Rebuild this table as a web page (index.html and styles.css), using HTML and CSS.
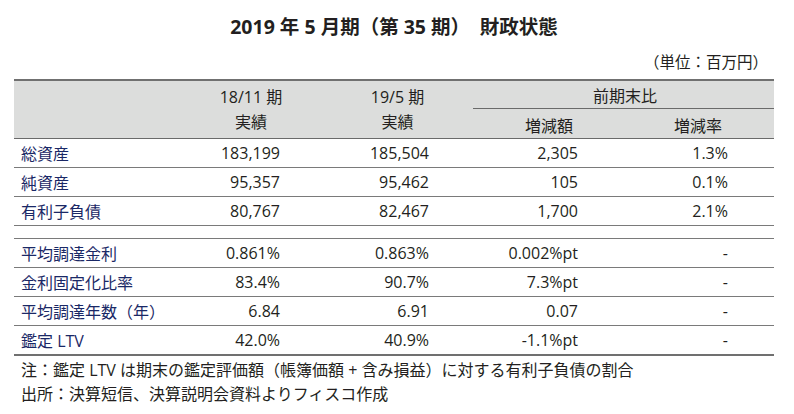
FILE: index.html
```html
<!DOCTYPE html>
<html lang="ja">
<head>
<meta charset="utf-8">
<link rel="stylesheet" href="styles.css">
</head>
<body>
<div class="wrap">
  <h1 class="title">2019 年 5 月期（第 35 期）　財政状態</h1>
  <div class="unit">（単位：百万円）</div>
  <div class="tbl">
    <div class="head">
      <div class="h-label"></div>
      <div class="h-per">18/11 期<br>実績</div>
      <div class="h-per">19/5 期<br>実績</div>
      <div class="h-cmp">前期末比</div>
      <div class="h-sub">増減額</div>
      <div class="h-sub">増減率</div>
    </div>
    <div class="row"><div class="lbl">総資産</div><div class="num">183,199</div><div class="num">185,504</div><div class="num">2,305</div><div class="num">1.3%</div></div>
    <div class="row"><div class="lbl">純資産</div><div class="num">95,357</div><div class="num">95,462</div><div class="num">105</div><div class="num">0.1%</div></div>
    <div class="row"><div class="lbl">有利子負債</div><div class="num">80,767</div><div class="num">82,467</div><div class="num">1,700</div><div class="num">2.1%</div></div>
    <div class="spacer"></div>
    <div class="row"><div class="lbl">平均調達金利</div><div class="num">0.861%</div><div class="num">0.863%</div><div class="num">0.002%pt</div><div class="num">-</div></div>
    <div class="row"><div class="lbl">金利固定化比率</div><div class="num">83.4%</div><div class="num">90.7%</div><div class="num">7.3%pt</div><div class="num">-</div></div>
    <div class="row"><div class="lbl">平均調達年数（年）</div><div class="num">6.84</div><div class="num">6.91</div><div class="num">0.07</div><div class="num">-</div></div>
    <div class="row last"><div class="lbl">鑑定 LTV</div><div class="num">42.0%</div><div class="num">40.9%</div><div class="num">-1.1%pt</div><div class="num">-</div></div>
  </div>
  <div class="notes">
    <p>注：鑑定 LTV は期末の鑑定評価額（帳簿価額 + 含み損益）に対する有利子負債の割合</p>
    <p>出所：決算短信、決算説明会資料よりフィスコ作成</p>
  </div>
</div>
</body>
</html>
```
FILE: styles.css
```css
* { box-sizing: border-box; }
html, body { margin: 0; padding: 0; background: #fff; }
body {
  font-family: "Open Sans", "Noto Sans CJK JP", sans-serif;
  color: #231f20;
  font-size: 16px;
}
.wrap {
  width: 760px;
  margin-left: 14px;
}
.title {
  margin: 15px 0 0;
  font-size: 19.5px;
  font-weight: 700;
  line-height: 24px;
  text-align: center;
}
.unit {
  margin-top: 11px;
  font-size: 15.5px;
  line-height: 24px;
  text-align: right;
  padding-right: 6px;
}
.tbl { margin-top: 5px; }
.head {
  display: grid;
  grid-template-columns: 163px 148px 145px 152px 152px;
  grid-template-rows: 28px 29px;
  background: #dcdddc;
  border-top: 2px solid #707070;
  border-bottom: 1px solid #6a6a6a;
}
.h-label { grid-row: 1 / 3; grid-column: 1; }
.h-per {
  grid-row: 1 / 3;
  display: flex;
  flex-direction: column;
  justify-content: center;
  align-items: center;
  text-align: center;
  line-height: 25px;
}
.h-per:nth-child(2) { grid-column: 2; }
.h-per:nth-child(3) { grid-column: 3; }
.h-cmp {
  grid-column: 4 / 6;
  grid-row: 1;
  display: flex;
  align-items: center;
  justify-content: center;
  border-bottom: 1px solid #6a6a6a;
  padding-left: 3px;
  margin-left: 3px;
}
.h-sub {
  grid-row: 2;
  display: flex;
  align-items: center;
  justify-content: center;
  padding-top: 3px;
}
.h-sub:nth-child(5) { grid-column: 4; padding-left: 6px; }
.h-sub:nth-child(6) { grid-column: 5; }
.row {
  display: grid;
  grid-template-columns: 163px 148px 145px 152px 152px;
  height: 29px;
  border-bottom: 1px solid #7a7a7a;
  align-items: center;
}
.row.last {
  height: 30px;
  border-bottom: 2px solid #707070;
}
.spacer {
  height: 13px;
  border-bottom: 1px solid #7a7a7a;
}
.lbl {
  color: #1a2866;
  padding-left: 7px;
  white-space: nowrap;
}
.num {
  text-align: right;
  padding-right: 45px;
}
.row .num:nth-child(3) { padding-right: 41px; }
.row .num:nth-child(4) { padding-right: 44px; }
.row .num:nth-child(5) { padding-right: 46px; }
.notes {
  margin-top: 2px;
  padding-left: 7px;
}
.notes p {
  margin: 0;
  line-height: 24px;
  font-size: 16px;
}
```
